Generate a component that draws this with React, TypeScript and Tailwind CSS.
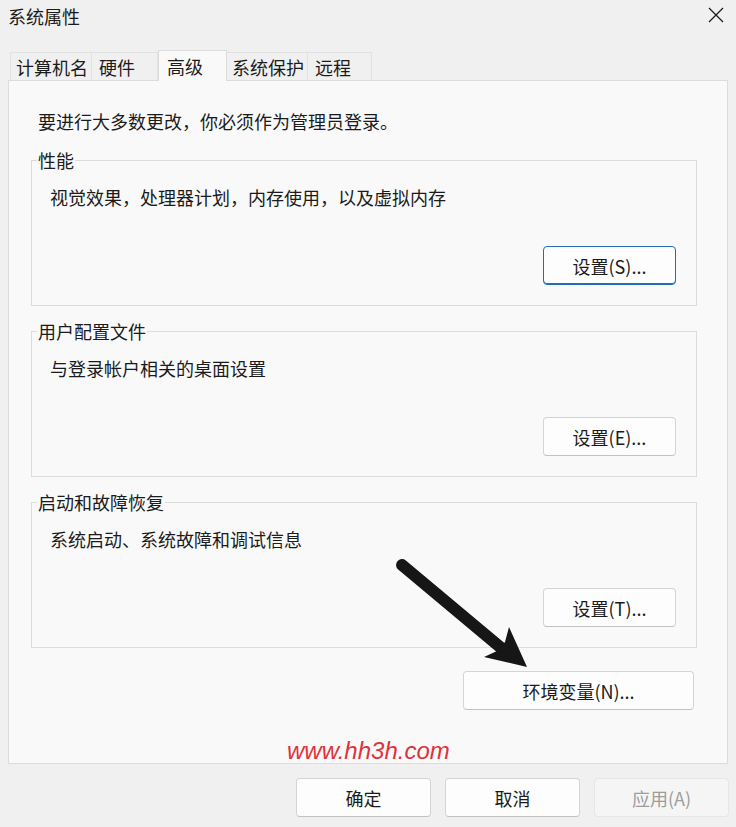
import type { ReactNode } from "react";

const font = "font-['Microsoft_YaHei_UI','Noto_Sans_CJK_SC','Noto_Sans',sans-serif]";

type Tab = { label: string; width: string; pad: string; active?: boolean };

const tabs: Tab[] = [
  { label: "计算机名", width: "w-[82px]", pad: "pl-[5px]" },
  { label: "硬件", width: "w-[66px]", pad: "pl-[7px]" },
  { label: "高级", width: "w-[69px]", pad: "pl-[8px]", active: true },
  { label: "系统保护", width: "w-[81px]", pad: "pl-[5px]" },
  { label: "远程", width: "w-[64px]", pad: "pl-[7px]" },
];

const Button = ({
  children,
  width = "w-[133px]",
  focused = false,
  disabled = false,
}: {
  children: ReactNode;
  width?: string;
  focused?: boolean;
  disabled?: boolean;
}) => {
  const tone = disabled
    ? "bg-[#f5f5f5] border-[#e6e6e6] text-[#9d9d9d]"
    : focused
      ? "bg-[#fdfdfd] border-[#1e6db5] shadow-[inset_0_-1px_0_#1e6db5] text-[#1b1b1b]"
      : "bg-[#fdfdfd] border-[#d4d4d4] border-b-[#c2c2c2] text-[#1b1b1b]";
  return (
    <button
      type="button"
      disabled={disabled}
      className={`${width} h-[39px] flex items-center justify-center rounded-[4px] border text-[18px] leading-[24px] ${tone}`}
    >
      {children}
    </button>
  );
};

const Group = ({
  title,
  text,
  action,
  focused,
  className = "",
}: {
  title: string;
  text: string;
  action: string;
  focused?: boolean;
  className?: string;
}) => (
  <fieldset className={`w-[666px] border border-[#dcdcdc] pb-[20px] ${className}`}>
    <legend className="ml-[5px] px-[1px] text-[18px] leading-[24px] text-[#1b1b1b]">
      {title}
    </legend>
    <p className="mt-[13px] pl-[18px] text-[18px] leading-[24px] text-[#1b1b1b]">{text}</p>
    <div className="mt-[37px] flex justify-end pr-[20px]">
      <Button focused={focused}>{action}</Button>
    </div>
  </fieldset>
);

export default function App() {
  return (
    <div className={`relative h-[827px] w-[736px] overflow-hidden bg-[#f0f0f0] ${font}`}>
      {/* title bar */}
      <div className="flex h-[32px] items-center justify-between pl-[8px] pr-[12px]">
        <span className="text-[18px] leading-[24px] text-[#1b1b1b]">系统属性</span>
        <svg width="16" height="16" viewBox="0 0 16 16" className="mt-[-2px]">
          <path d="M1 1 L15 15 M15 1 L1 15" stroke="#1b1b1b" strokeWidth="1.3" fill="none" />
        </svg>
      </div>

      {/* tabs */}
      <div className="mt-[18px] flex h-[30px] items-end pl-[10px]">
        {tabs.map((t) =>
          t.active ? (
            <div
              key={t.label}
              className={`${t.width} ${t.pad} relative z-10 -mb-px flex h-[31px] items-start border-x border-t border-[#dcdcdc] bg-[#f9f9f9] pt-[3px] text-[18px] leading-[24px] text-[#1b1b1b]`}
            >
              {t.label}
            </div>
          ) : (
            <div
              key={t.label}
              className={`${t.width} ${t.pad} flex h-[28px] items-center border-t border-r border-[#e2e2e2] first:border-l bg-[#f0f0f0] text-[18px] leading-[24px] text-[#1b1b1b]`}
            >
              {t.label}
            </div>
          ),
        )}
      </div>

      {/* advanced panel */}
      <div className="mx-2 h-[684px] border border-[#dcdcdc] bg-[#f9f9f9] pl-[22px] pt-[28px]">
        <p className="pl-[7px] text-[18px] leading-[24px] text-[#1b1b1b]">
          要进行大多数更改，你必须作为管理员登录。
        </p>
        <Group
          className="mt-[15px]"
          title="性能"
          text="视觉效果，处理器计划，内存使用，以及虚拟内存"
          action="设置(S)..."
          focused
        />
        <Group className="mt-[13px]" title="用户配置文件" text="与登录帐户相关的桌面设置" action="设置(E)..." />
        <Group className="mt-[13px]" title="启动和故障恢复" text="系统启动、系统故障和调试信息" action="设置(T)..." />
        <div className="mt-[23px] flex w-[666px] justify-end pr-[3px]">
          <Button width="w-[231px]">环境变量(N)...</Button>
        </div>
      </div>

      {/* dialog buttons */}
      <div className="mt-[14px] flex justify-end gap-[14px] pr-[7px]">
        <Button width="w-[135px]">确定</Button>
        <Button width="w-[135px]">取消</Button>
        <Button width="w-[135px]" disabled>
          应用(A)
        </Button>
      </div>

      {/* watermark */}
      <span className="absolute left-[287px] top-[737px] font-['Liberation_Sans',sans-serif] text-[24px] italic leading-[28px] text-[#e0323a]">
        www.hh3h.com
      </span>

      {/* pointer arrow */}
      <svg className="pointer-events-none absolute left-0 top-0" width="736" height="827">
        <line x1="402" y1="565" x2="500" y2="647" stroke="#161616" strokeWidth="12" strokeLinecap="round" />
        <polygon points="527,667 484,657 497,651 505,642 509,627" fill="#161616" />
      </svg>
    </div>
  );
}
